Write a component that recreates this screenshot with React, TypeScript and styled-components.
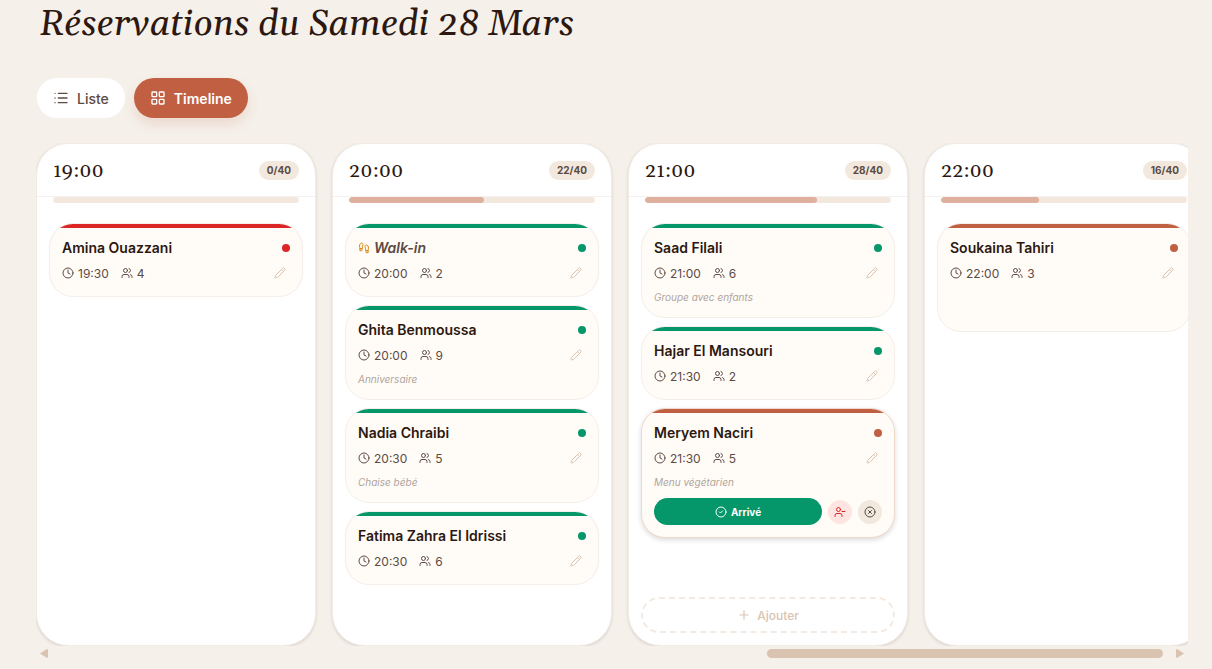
import React from "react";
import styled, { createGlobalStyle } from "styled-components";
import {
  CircleCheck,
  CircleX,
  Clock,
  Footprints,
  LayoutGrid,
  List,
  Pencil,
  Plus,
  UserMinus,
  Users,
} from "lucide-react";

const colors = {
  page: "#f5f0ea",
  ink: "#2c1810",
  muted: "#5c4a42",
  faint: "#b0a49c",
  sand: "#f3e8de",
  tan: "#dac3b0",
  accent: "#c05f41",
  green: "#059669",
  red: "#dc2626",
  amber: "#d98a1c",
};

const GlobalStyle = createGlobalStyle`
  * { box-sizing: border-box; }
  body {
    margin: 0;
    background: ${colors.page};
    color: ${colors.ink};
    font-family: Inter, "Liberation Sans", sans-serif;
  }
  button { font-family: inherit; cursor: pointer; border: 0; padding: 0; }
`;

const Page = styled.main`
  padding: 0 24px 8px 36px;
  overflow: hidden;
`;

const Title = styled.h1`
  margin: 0 0 28px;
  padding-left: 3px;
  font-family: Georgia, Gelasio, "Liberation Serif", serif;
  font-style: italic;
  font-weight: 400;
  font-size: 36px;
  line-height: 50px;
`;

const ViewSwitch = styled.div`
  display: flex;
  gap: 9px;
  padding-left: 1px;
  margin-bottom: 25px;
`;

const ViewButton = styled.button<{ $active?: boolean }>`
  display: flex;
  align-items: center;
  gap: 8px;
  height: 40px;
  padding: 0 16px;
  border-radius: 20px;
  font-size: 14px;
  font-weight: ${(p) => (p.$active ? 600 : 500)};
  color: ${(p) => (p.$active ? "#fff" : colors.muted)};
  background: ${(p) => (p.$active ? colors.accent : "#fff")};
  box-shadow: ${(p) => (p.$active ? "0 6px 12px rgba(192, 95, 65, 0.16)" : "none")};
`;

const Board = styled.section`
  display: flex;
  gap: 16px;
  overflow: hidden;
`;

const Column = styled.article`
  flex: 0 0 280px;
  display: flex;
  flex-direction: column;
  background: #fff;
  border: 1px solid #f2ebe4;
  border-radius: 32px;
  box-shadow: 0 1px 3px rgba(44, 24, 16, 0.14);
`;

const ColumnHeader = styled.header`
  display: flex;
  align-items: center;
  justify-content: space-between;
  height: 53px;
  padding: 0 16px;
  border-bottom: 1px solid #f4f1ee;
`;

const Hour = styled.h2`
  margin: 0;
  padding-top: 2px;
  font-family: Georgia, Gelasio, "Liberation Serif", serif;
  font-weight: 400;
  font-size: 20px;
  line-height: 28px;
`;

const Capacity = styled.span`
  padding: 0 8px;
  border-radius: 10px;
  background: ${colors.sand};
  color: ${colors.muted};
  font-size: 10px;
  font-weight: 700;
  line-height: 19px;
`;

const Gauge = styled.div`
  height: 6px;
  margin: 0 16px;
  border-radius: 3px;
  background: ${colors.sand};
  overflow: hidden;
`;

const GaugeFill = styled.div`
  height: 100%;
  border-radius: 3px;
  background: #dfb09e;
`;

const ColumnBody = styled.div`
  flex: 1;
  display: flex;
  flex-direction: column;
  gap: 8px;
  padding: 20px 12px 12px;
`;

const ColumnFooter = styled.div`
  height: 40px;
  margin-top: auto;
  padding-top: 4px;
`;

const AddButton = styled.button`
  display: flex;
  align-items: center;
  justify-content: center;
  gap: 6px;
  width: 100%;
  height: 36px;
  border: 2px dashed #f3ebe3;
  border-radius: 18px;
  background: transparent;
  color: ${colors.tan};
  font-size: 12px;
  font-weight: 500;
`;

const Card = styled.div<{ $tone: string; $raised?: boolean; $tall?: boolean }>`
  position: relative;
  min-height: ${(p) => (p.$tall ? "109px" : "74px")};
  padding: 12px;
  overflow: hidden;
  background: #fffcf8;
  border: 1px solid ${(p) => (p.$raised ? "#efd9cc" : "#f5eee8")};
  border-radius: 24px;
  box-shadow: ${(p) => (p.$raised ? "0 2px 5px rgba(44, 24, 16, 0.16)" : "none")};

  &::before {
    content: "";
    position: absolute;
    inset: 0 0 auto;
    height: 4px;
    background: ${(p) => p.$tone};
  }
`;

const CardTop = styled.div`
  display: flex;
  align-items: center;
  justify-content: space-between;
  height: 24px;
  margin-bottom: 2px;
`;

const Guest = styled.h3<{ $walkIn?: boolean }>`
  display: flex;
  align-items: center;
  gap: 4px;
  margin: 0;
  font-size: 14px;
  line-height: 20px;
  font-weight: 600;
  font-style: ${(p) => (p.$walkIn ? "italic" : "normal")};
  color: ${(p) => (p.$walkIn ? colors.muted : colors.ink)};

  svg { color: ${colors.amber}; }
`;

const Dot = styled.span<{ $tone: string }>`
  width: 8px;
  height: 8px;
  border-radius: 50%;
  background: ${(p) => p.$tone};
`;

const Meta = styled.div`
  display: flex;
  align-items: center;
  gap: 12px;
  height: 22px;
  font-size: 12px;
  color: ${colors.muted};
`;

const MetaItem = styled.span`
  display: flex;
  align-items: center;
  gap: 4px;
`;

const EditButton = styled.button`
  display: flex;
  margin-left: auto;
  padding: 4px;
  background: transparent;
  color: ${colors.tan};
`;

const Note = styled.p`
  margin: 5px 0 0;
  font-size: 10px;
  line-height: 16px;
  font-style: italic;
  color: ${colors.faint};
`;

const Actions = styled.div`
  display: flex;
  align-items: center;
  gap: 6px;
  margin-top: 8px;
`;

const ArrivedButton = styled.button`
  flex: 1;
  display: flex;
  align-items: center;
  justify-content: center;
  gap: 4px;
  height: 27px;
  border-radius: 14px;
  background: ${colors.green};
  color: #fff;
  font-size: 10px;
  font-weight: 700;
`;

const RoundButton = styled.button<{ $danger?: boolean }>`
  display: flex;
  align-items: center;
  justify-content: center;
  width: 24px;
  height: 24px;
  border-radius: 50%;
  background: ${(p) => (p.$danger ? "#fee5e2" : "#f1e8de")};
  color: ${(p) => (p.$danger ? colors.red : colors.muted)};
`;

const ScrollRow = styled.div`
  display: flex;
  align-items: center;
  height: 15px;
`;

const ScrollArrow = styled.button`
  display: flex;
  align-items: center;
  justify-content: center;
  width: 16px;
  height: 15px;
  background: transparent;
`;

const ScrollTrack = styled.div`
  flex: 1;
  display: flex;
`;

const ScrollThumb = styled.div`
  width: 35.4%;
  margin-left: 63.8%;
  height: 9px;
  border-radius: 5px;
  background: ${colors.tan};
`;

type Booking = {
  name: string;
  time: string;
  guests: number;
  tone: string;
  note?: string;
  walkIn?: boolean;
  pending?: boolean;
  tall?: boolean;
};

type Slot = { hour: string; booked: number; canAdd?: boolean; bookings: Booking[] };

const CAPACITY = 40;

const slots: Slot[] = [
  {
    hour: "19:00",
    booked: 0,
    bookings: [{ name: "Amina Ouazzani", time: "19:30", guests: 4, tone: colors.red }],
  },
  {
    hour: "20:00",
    booked: 22,
    bookings: [
      { name: "Walk-in", time: "20:00", guests: 2, tone: colors.green, walkIn: true },
      { name: "Ghita Benmoussa", time: "20:00", guests: 9, tone: colors.green, note: "Anniversaire" },
      { name: "Nadia Chraibi", time: "20:30", guests: 5, tone: colors.green, note: "Chaise bébé" },
      { name: "Fatima Zahra El Idrissi", time: "20:30", guests: 6, tone: colors.green },
    ],
  },
  {
    hour: "21:00",
    booked: 28,
    canAdd: true,
    bookings: [
      { name: "Saad Filali", time: "21:00", guests: 6, tone: colors.green, note: "Groupe avec enfants" },
      { name: "Hajar El Mansouri", time: "21:30", guests: 2, tone: colors.green },
      {
        name: "Meryem Naciri",
        time: "21:30",
        guests: 5,
        tone: colors.accent,
        note: "Menu végétarien",
        pending: true,
      },
    ],
  },
  {
    hour: "22:00",
    booked: 16,
    bookings: [{ name: "Soukaina Tahiri", time: "22:00", guests: 3, tone: colors.accent, tall: true }],
  },
];

function BookingCard({ booking }: { booking: Booking }) {
  return (
    <Card $tone={booking.tone} $raised={booking.pending} $tall={booking.tall}>
      <CardTop>
        <Guest $walkIn={booking.walkIn}>
          {booking.walkIn && <Footprints size={12} />}
          {booking.name}
        </Guest>
        <Dot $tone={booking.tone} />
      </CardTop>
      <Meta>
        <MetaItem>
          <Clock size={12} />
          {booking.time}
        </MetaItem>
        <MetaItem>
          <Users size={12} />
          {booking.guests}
        </MetaItem>
        <EditButton aria-label="Modifier">
          <Pencil size={12} />
        </EditButton>
      </Meta>
      {booking.note && <Note>{booking.note}</Note>}
      {booking.pending && (
        <Actions>
          <ArrivedButton>
            <CircleCheck size={12} />
            Arrivé
          </ArrivedButton>
          <RoundButton $danger aria-label="Absent">
            <UserMinus size={12} />
          </RoundButton>
          <RoundButton aria-label="Annuler">
            <CircleX size={12} />
          </RoundButton>
        </Actions>
      )}
    </Card>
  );
}

export default function App() {
  return (
    <>
      <GlobalStyle />
      <Page>
        <Title>Réservations du Samedi 28 Mars</Title>
        <ViewSwitch>
          <ViewButton>
            <List size={16} />
            Liste
          </ViewButton>
          <ViewButton $active>
            <LayoutGrid size={16} />
            Timeline
          </ViewButton>
        </ViewSwitch>
        <Board>
          {slots.map((slot) => (
            <Column key={slot.hour}>
              <ColumnHeader>
                <Hour>{slot.hour}</Hour>
                <Capacity>
                  {slot.booked}/{CAPACITY}
                </Capacity>
              </ColumnHeader>
              <Gauge>
                <GaugeFill style={{ width: `${(slot.booked / CAPACITY) * 100}%` }} />
              </Gauge>
              <ColumnBody>
                {slot.bookings.map((booking) => (
                  <BookingCard key={booking.name} booking={booking} />
                ))}
                <ColumnFooter>
                  {slot.canAdd && (
                    <AddButton>
                      <Plus size={14} />
                      Ajouter
                    </AddButton>
                  )}
                </ColumnFooter>
              </ColumnBody>
            </Column>
          ))}
        </Board>
        <ScrollRow>
          <ScrollArrow aria-label="Précédent">
            <svg width="8" height="9" viewBox="0 0 8 9">
              <path d="M7 0 8 1V8L7 9 0 4.5Z" fill={colors.tan} />
            </svg>
          </ScrollArrow>
          <ScrollTrack>
            <ScrollThumb />
          </ScrollTrack>
          <ScrollArrow aria-label="Suivant">
            <svg width="8" height="9" viewBox="0 0 8 9">
              <path d="M1 0 0 1V8L1 9 8 4.5Z" fill={colors.tan} />
            </svg>
          </ScrollArrow>
        </ScrollRow>
      </Page>
    </>
  );
}
